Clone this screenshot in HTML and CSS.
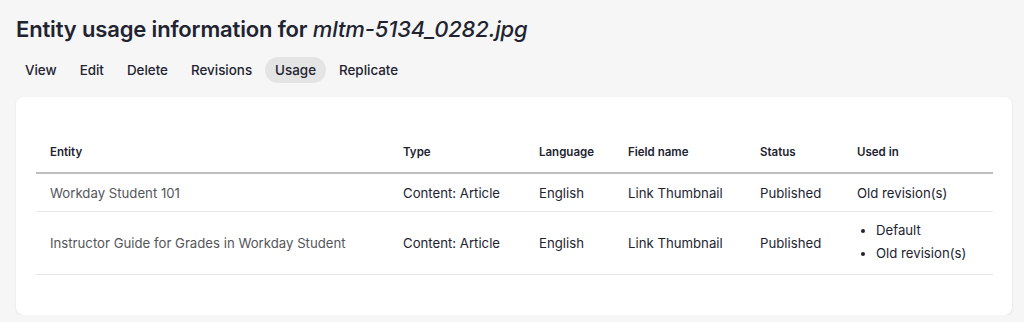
FILE: index.html
```html
<!DOCTYPE html>
<html>
<head>
    <title>Entity usage information</title>
    <link rel="stylesheet" href="styles.css">
</head>
<body>
    <div class="page">
        <h1 class="page-title">Entity usage information for <em>mltm-5134_0282.jpg</em></h1>

        <!-- Local tasks -->
        <ul class="tabs">
            <li><a href="#">View</a></li>
            <li><a href="#">Edit</a></li>
            <li><a href="#">Delete</a></li>
            <li><a href="#">Revisions</a></li>
            <li><a href="#" class="is-active">Usage</a></li>
            <li><a href="#">Replicate</a></li>
        </ul>

        <!-- Usage table -->
        <div class="card">
            <table class="usage-table">
                <colgroup>
                    <col style="width: 353px">
                    <col style="width: 136px">
                    <col style="width: 89px">
                    <col style="width: 132px">
                    <col style="width: 97px">
                    <col>
                </colgroup>
                <thead>
                    <tr>
                        <th>Entity</th>
                        <th>Type</th>
                        <th>Language</th>
                        <th>Field name</th>
                        <th>Status</th>
                        <th>Used in</th>
                    </tr>
                </thead>
                <tbody>
                    <tr>
                        <td class="entity">Workday Student 101</td>
                        <td>Content: Article</td>
                        <td>English</td>
                        <td>Link Thumbnail</td>
                        <td>Published</td>
                        <td>Old revision(s)</td>
                    </tr>
                    <tr>
                        <td class="entity">Instructor Guide for Grades in Workday Student</td>
                        <td>Content: Article</td>
                        <td>English</td>
                        <td>Link Thumbnail</td>
                        <td>Published</td>
                        <td>
                            <ul class="used-in">
                                <li>Default</li>
                                <li>Old revision(s)</li>
                            </ul>
                        </td>
                    </tr>
                </tbody>
            </table>
        </div>
    </div>
</body>
</html>
```

FILE: styles.css
```css
body {
    margin: 0;
    background: #f6f6f6;
    font-family: Inter, "Noto Sans", sans-serif;
    color: #222330;
}
.page {
    padding: 0 12px 0 16px;
}
.page-title {
    margin: 0;
    padding-top: 13px;
    font-size: 22px;
    line-height: 32px;
    font-weight: 600;
    letter-spacing: -0.15px;
}
.page-title em {
    font-weight: 500;
}
.tabs {
    display: flex;
    gap: 3px;
    list-style: none;
    margin: 12px 0 0 -1px;
    padding: 0;
}
.tabs a {
    display: block;
    padding: 0 10px;
    height: 26px;
    line-height: 26px;
    border-radius: 13px;
    font-size: 13.4px;
    font-weight: 500;
    color: #222330;
    text-decoration: none;
}
.tabs a.is-active {
    background: #e4e4e4;
}
.card {
    margin-top: 14px;
    padding: 34px 19px 40px 20px;
    background: white;
    border-radius: 8px;
    box-shadow: 0 1px 3px rgba(0,0,0,0.08);
}
.usage-table {
    width: 100%;
    border-collapse: collapse;
    table-layout: fixed;
}
.usage-table th,
.usage-table td {
    padding: 0 14px;
    text-align: left;
    font-size: 13.2px;
}
.usage-table th {
    height: 41px;
    font-size: 11.5px;
    font-weight: 600;
    border-bottom: 2px solid #bfbfbf;
}
.usage-table td {
    height: 37px;
    border-bottom: 1px solid #e6e6e6;
}
.usage-table td.entity {
    color: #55565b;
}
.used-in {
    margin: 0;
    padding: 7px 0 9px 19px;
}
.used-in li {
    line-height: 23px;
}
```
